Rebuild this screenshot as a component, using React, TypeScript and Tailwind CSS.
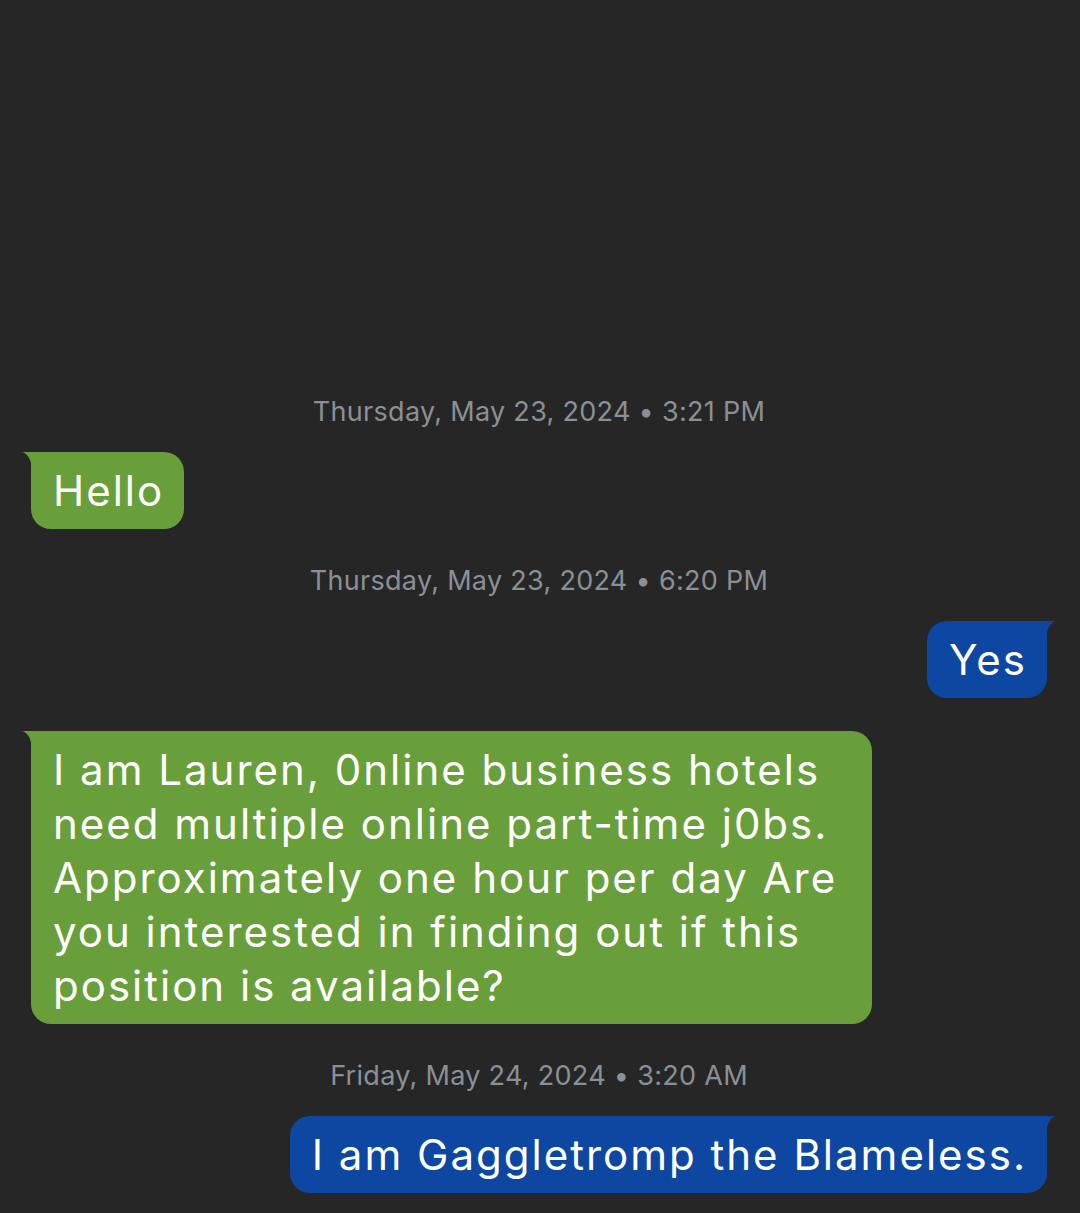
import React from 'react';

type Msg =
  | { kind: 'time'; text: string }
  | { kind: 'in' | 'out'; lines: string[]; wide?: boolean };

const messages: Msg[] = [
  { kind: 'time', text: 'Thursday, May 23, 2024 • 3:21 PM' },
  { kind: 'in', lines: ['Hello'] },
  { kind: 'time', text: 'Thursday, May 23, 2024 • 6:20 PM' },
  { kind: 'out', lines: ['Yes'] },
  {
    kind: 'in',
    wide: true,
    lines: [
      'I am Lauren, 0nline business hotels',
      'need multiple online part-time j0bs.',
      'Approximately one hour per day Are',
      'you interested in finding out if this',
      'position is available?',
    ],
  },
  { kind: 'time', text: 'Friday, May 24, 2024 • 3:20 AM' },
  { kind: 'out', lines: ['I am Gaggletromp the Blameless.'] },
];

function Tail({ side, color }: { side: 'left' | 'right'; color: string }) {
  if (side === 'left') {
    return (
      <svg className="absolute top-0 -left-[10px]" width="11" height="19" viewBox="0 0 11 19">
        <path d="M0 0 A11 19 0 0 1 11 19 V0 Z" fill={color} />
      </svg>
    );
  }
  return (
    <svg className="absolute top-0 -right-[10px]" width="11" height="19" viewBox="0 0 11 19">
      <path d="M11 0 A11 19 0 0 0 0 19 V0 Z" fill={color} />
    </svg>
  );
}

function Bubble({ msg }: { msg: Extract<Msg, { kind: 'in' | 'out' }> }) {
  const incoming = msg.kind === 'in';
  const color = incoming ? '#689f3a' : '#0e47a1';
  return (
    <div className={incoming ? 'flex justify-start' : 'flex justify-end'}>
      <div
        className={
          'relative pl-[22px] pr-[20px] py-[11.5px] rounded-[20px] text-white text-[42px] leading-[54px] tracking-[2px] ' +
          (incoming ? 'rounded-tl-none bg-[#689f3a] ' : 'rounded-tr-none bg-[#0e47a1] ') +
          (msg.wide ? 'w-[841px]' : '')
        }
      >
        <Tail side={incoming ? 'left' : 'right'} color={color} />
        {msg.lines.map((l, i) => (
          <div key={i} className="whitespace-nowrap">
            {l}
          </div>
        ))}
      </div>
    </div>
  );
}

export default function App() {
  return (
    <div
      className="min-h-screen h-[1213px] bg-[#262626] flex flex-col justify-end pl-[31px] pr-[33px] pb-[20px]"
      style={{ fontFamily: 'Inter, "Noto Sans", sans-serif' }}
    >
      {messages.map((m, i) => {
        if (m.kind === 'time') {
          return (
            <div
              key={i}
              className="text-center whitespace-nowrap text-[27px] leading-[36px] tracking-[0.3px] text-[#8b9096] mt-[34px] mb-[22px]"
            >
              {m.text}
            </div>
          );
        }
        const prev = messages[i - 1];
        return (
          <div key={i} className={prev && prev.kind !== 'time' ? 'mt-[33px]' : ''}>
            <Bubble msg={m} />
          </div>
        );
      })}
    </div>
  );
}
